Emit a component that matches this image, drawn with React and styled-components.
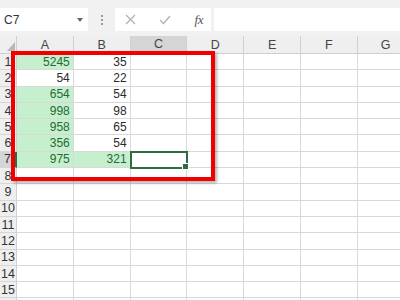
import styled, { createGlobalStyle } from "styled-components";

const GlobalStyle = createGlobalStyle`
  html, body {
    margin: 0;
    padding: 0;
    background: #ffffff;
  }
  * {
    box-sizing: border-box;
  }
`;

const Page = styled.div`
  width: 400px;
  height: 300px;
  overflow: hidden;
  font-family: "Liberation Sans", "Noto Sans CJK SC", sans-serif;
  background: #ffffff;
`;

const FormulaBar = styled.div`
  display: flex;
  align-items: flex-start;
  height: 36px;
  padding-top: 8px;
  background: #f1f1f1;
`;

const NameBox = styled.div`
  width: 88px;
  height: 23px;
  background: #ffffff;
  display: flex;
  align-items: center;
  justify-content: space-between;
  padding: 0 5px 0 4px;
  font-size: 12px;
  color: #333333;
`;

const Caret = styled.span`
  width: 0;
  height: 0;
  border-left: 3px solid transparent;
  border-right: 3px solid transparent;
  border-top: 4px solid #666666;
`;

const Grip = styled.div`
  width: 27px;
  height: 23px;
  display: flex;
  align-items: center;
  justify-content: center;
`;

const Dots = styled.div`
  display: flex;
  flex-direction: column;
  gap: 2px;

  span {
    width: 2px;
    height: 2px;
    background: #9a9a9a;
  }
`;

const FnBox = styled.div`
  width: 96px;
  height: 23px;
  background: #ffffff;
  display: flex;
  align-items: center;
  justify-content: space-between;
  padding: 0 8px 0 10px;
`;

const Fx = styled.span`
  font-family: "Liberation Serif", serif;
  font-style: italic;
  font-size: 13px;
  color: #555555;
  letter-spacing: -0.5px;
`;

const FormulaInput = styled.div`
  flex: 1;
  height: 23px;
  margin-left: 3px;
  background: #ffffff;
`;

const Sheet = styled.div`
  position: relative;
`;

const Grid = styled.div`
  display: grid;
  grid-template-columns: 17px repeat(7, 56.8px);
  grid-template-rows: 18px repeat(16, 16.3px);
`;

const Corner = styled.div`
  background: #efefef;
  border-right: 1px solid #cfcfcf;
  border-bottom: 1px solid #cfcfcf;
  display: flex;
  align-items: flex-end;
  justify-content: flex-end;
  padding: 0 1px 2px 0;
`;

const ColHead = styled.div`
  background: ${(p) => (p.$active ? "#d5d5d5" : "#efefef")};
  border-right: 1px solid #d0d0d0;
  border-bottom: ${(p) => (p.$active ? "2px solid #217346" : "1px solid #cfcfcf")};
  display: flex;
  align-items: center;
  justify-content: center;
  font-size: 12.5px;
  color: #444444;
`;

const RowHead = styled.div`
  background: ${(p) => (p.$active ? "#d5d5d5" : "#efefef")};
  border-right: ${(p) => (p.$active ? "2px solid #217346" : "1px solid #cfcfcf")};
  border-bottom: 1px solid #d6d6d6;
  display: flex;
  align-items: center;
  justify-content: center;
  font-size: 12.5px;
  color: #333333;
`;

const Cell = styled.div`
  position: relative;
  background: ${(p) => (p.$good ? "#c6efce" : "#ffffff")};
  color: ${(p) => (p.$good ? "#1f6b35" : "#2a2a2a")};
  border-right: 1px solid #d8d8d8;
  border-bottom: 1px solid #d8d8d8;
  display: flex;
  align-items: center;
  justify-content: flex-end;
  padding-right: 3px;
  font-size: 12px;
  ${(p) =>
    p.$selected &&
    `
    outline: 2px solid #2f6b45;
    outline-offset: -1px;
    z-index: 1;
    &::after {
      content: "";
      position: absolute;
      right: -3px;
      bottom: -3px;
      width: 5px;
      height: 5px;
      background: #2f6b45;
      border: 1px solid #ffffff;
    }
  `}
`;

const Callout = styled.div`
  position: absolute;
  left: 11px;
  top: 15px;
  width: 204px;
  height: 130px;
  border: 4px solid #f20000;
  box-shadow: 2px 2px 3px rgba(0, 0, 0, 0.3);
  z-index: 2;
  pointer-events: none;
`;

const columns = ["A", "B", "C", "D", "E", "F", "G"];

const data = [
  [5245, 35],
  [54, 22],
  [654, 54],
  [998, 98],
  [958, 65],
  [356, 54],
  [975, 321],
];

const isGood = (r, c) => (c === 0 && r !== 1) || (r === 6 && c === 1);

function XIcon() {
  return (
    <svg width="11" height="11" viewBox="0 0 11 11">
      <path d="M1 1 L10 10 M10 1 L1 10" stroke="#b0b0b0" strokeWidth="1.2" fill="none" />
    </svg>
  );
}

function CheckIcon() {
  return (
    <svg width="12" height="10" viewBox="0 0 12 10">
      <path d="M1 5 L4.5 8.5 L11 1" stroke="#b0b0b0" strokeWidth="1.2" fill="none" />
    </svg>
  );
}

function RowGroup({ r }) {
  const values = data[r] || [];
  return (
    <>
      {/* last row is mostly below the window edge, label left out */}
      <RowHead $active={r === 6}>{r < 15 ? r + 1 : ""}</RowHead>
      {columns.map((col, c) => (
        <Cell
          key={col}
          $good={r < 7 && c < 2 && isGood(r, c)}
          $selected={r === 6 && c === 2}
        >
          {values[c]}
        </Cell>
      ))}
    </>
  );
}

function App() {
  const rows = Array.from({ length: 16 }, (_, i) => i);

  return (
    <Page>
      <GlobalStyle />
      <FormulaBar>
        <NameBox>
          <span>C7</span>
          <Caret />
        </NameBox>
        <Grip>
          <Dots>
            <span />
            <span />
            <span />
          </Dots>
        </Grip>
        <FnBox>
          <XIcon />
          <CheckIcon />
          <Fx>fx</Fx>
        </FnBox>
        <FormulaInput />
      </FormulaBar>

      <Sheet>
        <Grid>
          <Corner>
            <svg width="8" height="9" viewBox="0 0 8 9">
              <polygon points="8,0 8,9 0,9" fill="#b8b8b8" />
            </svg>
          </Corner>
          {columns.map((col) => (
            <ColHead key={col} $active={col === "C"}>
              {col}
            </ColHead>
          ))}
          {rows.map((r) => (
            <RowGroup key={r} r={r} />
          ))}
        </Grid>
        <Callout />
      </Sheet>
    </Page>
  );
}

export default App;
